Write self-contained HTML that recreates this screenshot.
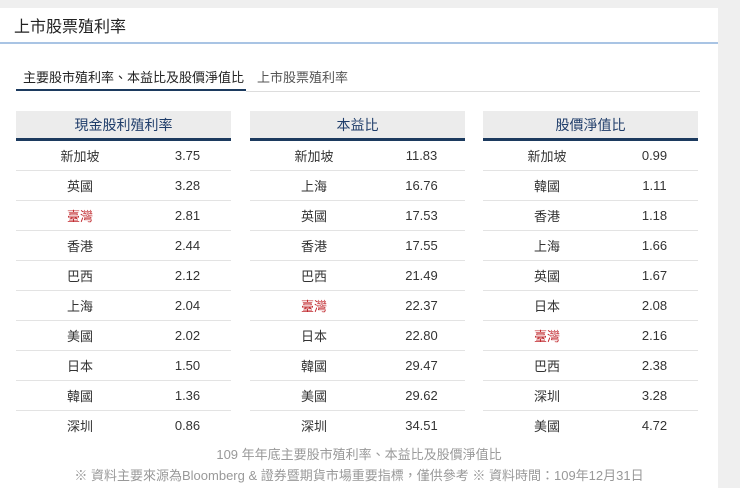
<!DOCTYPE html>
<html><head><meta charset="utf-8"><style>
body{margin:0;width:740px;height:488px;background:#efefef;font-family:"Liberation Sans","Noto Sans CJK TC",sans-serif;overflow:hidden;position:relative}
.panel{position:absolute;left:0;top:8px;width:718px;height:480px;background:#fff}
.title{position:absolute;left:14px;top:5px;font-size:16px;color:#222}
.hl{position:absolute;left:0;top:34px;width:718px;height:2px;background:#a9c4e4}
.tab1{position:absolute;left:23px;top:59px;font-size:13px;color:#222}
.tab2{position:absolute;left:257px;top:59px;font-size:13px;color:#555}
.tu{position:absolute;left:16px;top:81px;width:230px;height:2px;background:#1c3a5e}
.tl{position:absolute;left:246px;top:83px;width:454px;height:1px;background:#ddd}
table{position:absolute;top:103px;width:215px;border-collapse:collapse;font-size:13px;color:#333}
th{height:27px;padding:0;background:#ececec;color:#1f3d6a;font-weight:normal;font-size:14px;border-bottom:3px solid #1c3a5e}
td{height:29px;padding:0;border-bottom:1px solid #e3e3e3;text-align:center}
tr:last-child td{border-bottom:none}
td:first-child{width:128px}
.r{color:#c0282d}
.cap{position:absolute;width:718px;text-align:center;color:#999;font-size:13px}
</style></head><body>
<div class="panel">
<div class="title">上市股票殖利率</div>
<div class="hl"></div>
<div class="tab1">主要股市殖利率、本益比及股價淨值比</div>
<div class="tab2">上市股票殖利率</div>
<div class="tu"></div><div class="tl"></div>
<table style="left:16px"><tr><th colspan="2">現金股利殖利率</th></tr>
<tr><td>新加坡</td><td>3.75</td></tr><tr><td>英國</td><td>3.28</td></tr><tr><td class="r">臺灣</td><td>2.81</td></tr><tr><td>香港</td><td>2.44</td></tr><tr><td>巴西</td><td>2.12</td></tr><tr><td>上海</td><td>2.04</td></tr><tr><td>美國</td><td>2.02</td></tr><tr><td>日本</td><td>1.50</td></tr><tr><td>韓國</td><td>1.36</td></tr><tr><td>深圳</td><td>0.86</td></tr></table>
<table style="left:250px"><tr><th colspan="2">本益比</th></tr>
<tr><td>新加坡</td><td>11.83</td></tr><tr><td>上海</td><td>16.76</td></tr><tr><td>英國</td><td>17.53</td></tr><tr><td>香港</td><td>17.55</td></tr><tr><td>巴西</td><td>21.49</td></tr><tr><td class="r">臺灣</td><td>22.37</td></tr><tr><td>日本</td><td>22.80</td></tr><tr><td>韓國</td><td>29.47</td></tr><tr><td>美國</td><td>29.62</td></tr><tr><td>深圳</td><td>34.51</td></tr></table>
<table style="left:483px"><tr><th colspan="2">股價淨值比</th></tr>
<tr><td>新加坡</td><td>0.99</td></tr><tr><td>韓國</td><td>1.11</td></tr><tr><td>香港</td><td>1.18</td></tr><tr><td>上海</td><td>1.66</td></tr><tr><td>英國</td><td>1.67</td></tr><tr><td>日本</td><td>2.08</td></tr><tr><td class="r">臺灣</td><td>2.16</td></tr><tr><td>巴西</td><td>2.38</td></tr><tr><td>深圳</td><td>3.28</td></tr><tr><td>美國</td><td>4.72</td></tr></table>
<div class="cap" style="top:436px">109 年年底主要股市殖利率、本益比及股價淨值比</div>
<div class="cap" style="top:457px">※ 資料主要來源為Bloomberg &amp; 證券暨期貨市場重要指標，僅供參考 ※ 資料時間：109年12月31日</div>
</div>
</body></html>
